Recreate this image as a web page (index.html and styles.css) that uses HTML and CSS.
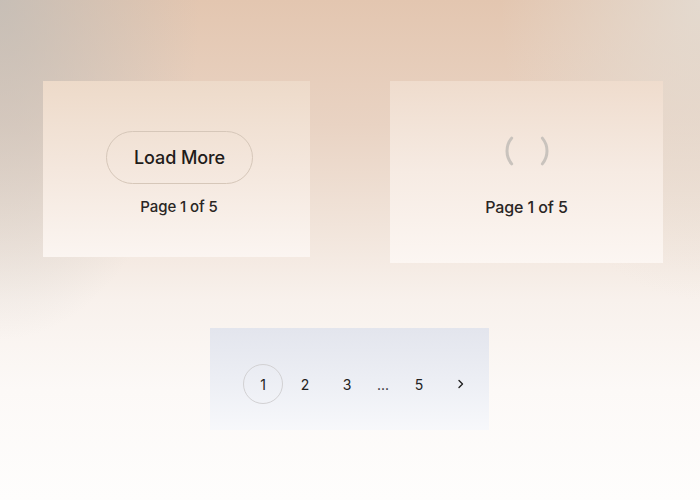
FILE: index.html
```html
<!DOCTYPE html>
<html>
<head>
<meta charset="utf-8">
<link rel="stylesheet" href="styles.css">
</head>
<body>
<div class="page">
  <div class="row">
    <div class="card card-left">
      <button class="load-btn">Load More</button>
      <div class="page-label small">Page 1 of 5</div>
    </div>
    <div class="card card-right">
      <svg class="spinner" width="48" height="48" viewBox="0 0 48 48">
        <path d="M8.68 11.14 A20 20 0 0 0 8.68 36.86" fill="none" stroke="#c9c3bd" stroke-width="3" stroke-linecap="round"/>
        <path d="M39.32 11.14 A20 20 0 0 1 39.32 36.86" fill="none" stroke="#c9c3bd" stroke-width="3" stroke-linecap="round"/>
      </svg>
      <div class="page-label">Page 1 of 5</div>
    </div>
  </div>
  <div class="pager">
    <span class="pg active">1</span>
    <span class="pg">2</span>
    <span class="pg">3</span>
    <span class="pg dots">...</span>
    <span class="pg">5</span>
    <span class="pg">
      <svg width="12" height="12" viewBox="0 0 12 12"><path d="M4 2.5 L7.5 6 L4 9.5" fill="none" stroke="#222" stroke-width="1.4" stroke-linecap="round" stroke-linejoin="round"/></svg>
    </span>
  </div>
</div>
</body>
</html>
```
FILE: styles.css
```css
html, body {
  margin: 0;
  padding: 0;
}
body {
  width: 700px;
  height: 500px;
  overflow: hidden;
  font-family: Inter, "Noto Sans", sans-serif;
  color: #222;
  background:
    radial-gradient(ellipse 200px 340px at 0px 0px, rgba(190,188,184,0.75), rgba(200,196,190,0) 100%),
    radial-gradient(ellipse 200px 300px at 700px 0px, rgba(228,222,214,0.8), rgba(228,222,214,0) 100%),
    linear-gradient(to bottom, #e3c6b0 0%, #e9d3c3 25%, #f1e4da 45%, #f8f1ec 60%, #fcf9f7 78%, #fefdfc 100%);
}
.page {
  padding-top: 81px;
}
.row {
  display: flex;
  align-items: flex-start;
  gap: 80px;
  padding-left: 43px;
}
.card {
  display: flex;
  flex-direction: column;
  align-items: center;
  justify-content: center;
  box-sizing: border-box;
}
.card-left {
  width: 267px;
  height: 176px;
  padding-top: 8px;
  background: linear-gradient(to bottom, #eddac9 0%, #f4e7dd 50%, #fbf5f1 100%);
}
.card-right {
  width: 273px;
  height: 182px;
  padding-top: 0px;
  background: linear-gradient(to bottom, #efdccd 0%, #f6ebe3 50%, #fcf6f2 100%);
}
.load-btn {
  width: 147px;
  height: 53px;
  border-radius: 27px;
  border: 1px solid #d6c7b9;
  background: transparent;
  font-family: Inter, "Noto Sans", sans-serif;
  font-size: 18px;
  font-weight: 500;
  color: #1f1c1a;
  padding: 0;
  margin-left: 6px;
  letter-spacing: -0.1px;
}
.page-label {
  font-size: 16px;
  font-weight: 500;
  color: #2a2624;
  margin-top: 12px;
  letter-spacing: -0.1px;
}
.page-label.small {
  font-size: 15px;
  margin-top: 13px;
  margin-left: 5px;
}
.spinner {
  display: block;
  margin-bottom: 10px;
}
.pager {
  margin-top: 65px;
  margin-left: 210px;
  width: 279px;
  height: 102px;
  box-sizing: border-box;
  padding-left: 33px;
  padding-top: 36px;
  display: flex;
  align-items: flex-start;
  gap: 2px;
  background: linear-gradient(to bottom, #e3e5ed 0%, #eceef4 50%, #f7f8fb 100%);
}
.pg {
  width: 40px;
  height: 40px;
  display: flex;
  align-items: center;
  justify-content: center;
  font-size: 14px;
  color: #222222;
  box-sizing: border-box;
}
.pg.active {
  border: 1px solid #d2d1d3;
  border-radius: 50%;
  color: #222222;
}
.pg.dots {
  width: 28px;
}
```
